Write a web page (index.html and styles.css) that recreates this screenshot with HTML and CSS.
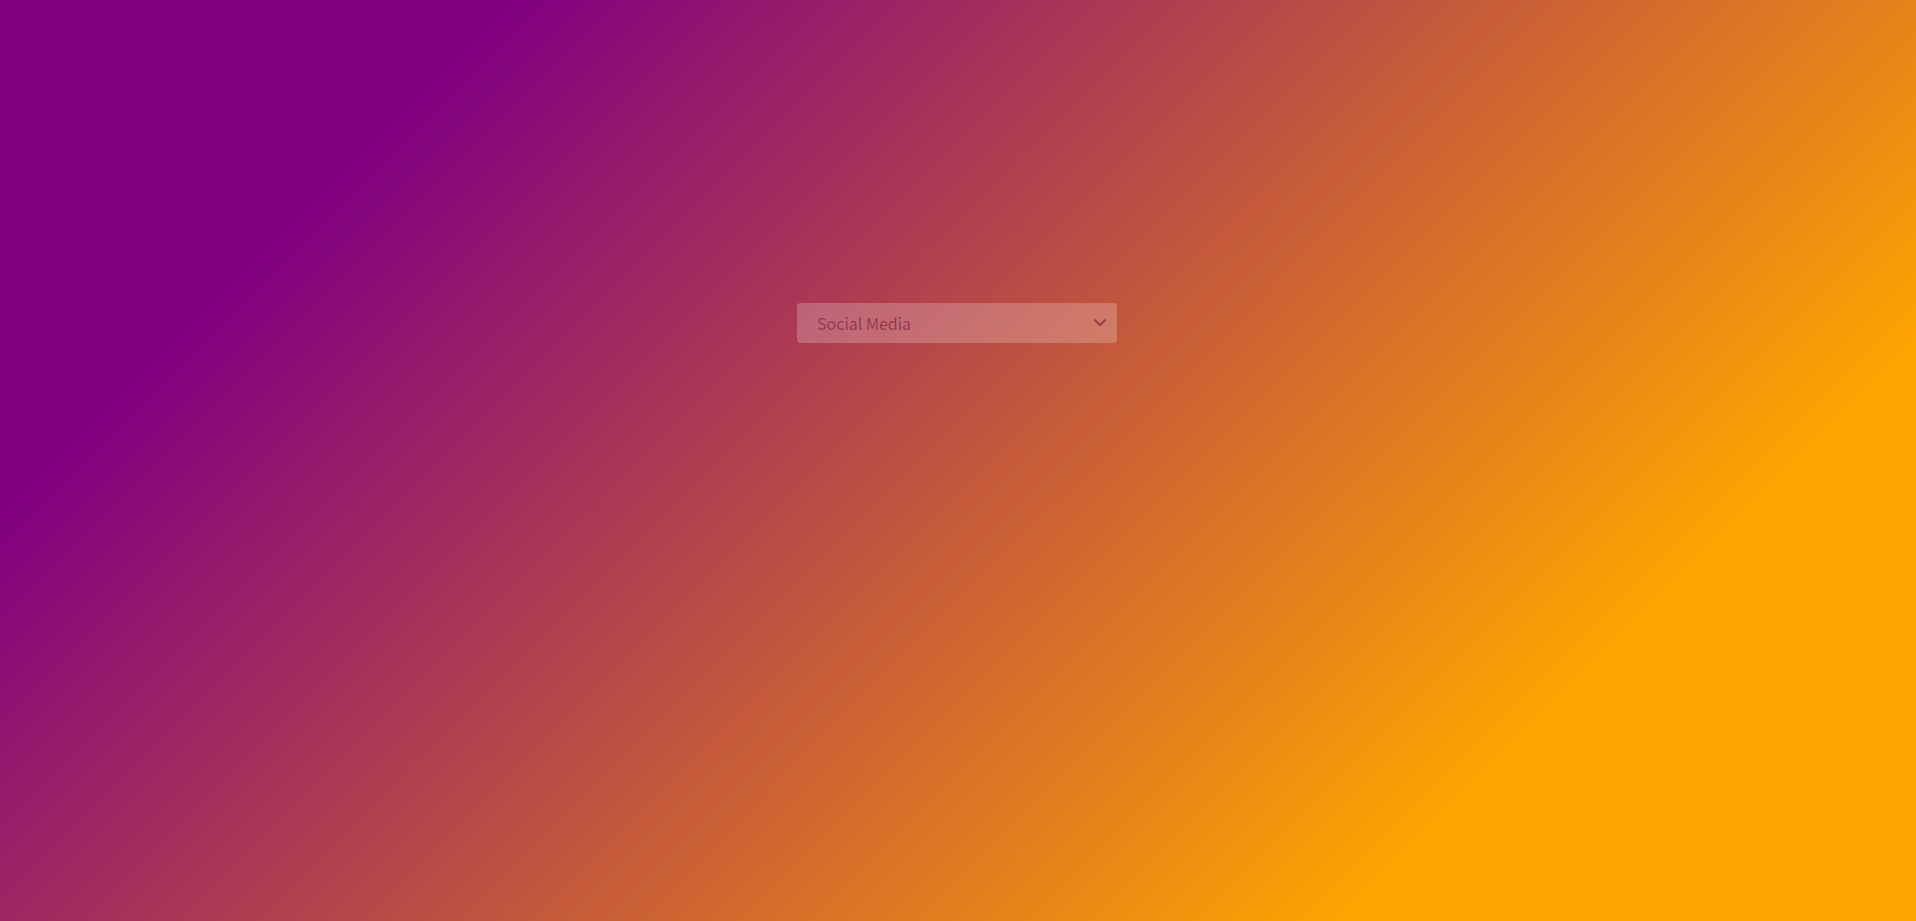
FILE: index.html
```html
<!DOCTYPE html>
<html lang="en">
<head>
<meta charset="utf-8">
<title>Social Media</title>
<link rel="stylesheet" href="styles.css">
</head>
<body>
<main class="page">
  <div class="select">
    <span class="select-label">Social Media</span>
    <svg class="chevron" width="12" height="8" viewBox="0 0 12 8" aria-hidden="true">
      <path d="M1 1.2 L6 6.2 L11 1.2" fill="none" stroke="currentColor" stroke-width="1.9" stroke-linecap="round" stroke-linejoin="round"/>
    </svg>
  </div>
</main>
</body>
</html>
```

FILE: styles.css
```css
html, body {
  margin: 0;
  padding: 0;
  height: 100%;
}

body {
  font-family: "Noto Sans CJK KR", "Noto Sans", sans-serif;
  background: linear-gradient(135deg, #800080 18%, #ffa500 80%);
  background-attachment: fixed;
  min-height: 100vh;
}

.page {
  display: flex;
  justify-content: center;
  padding-top: 303px;
}

.select {
  box-sizing: border-box;
  width: 320px;
  height: 40px;
  margin-right: 2px;
  display: flex;
  align-items: center;
  justify-content: space-between;
  padding: 0 11px 0 20px;
  border-radius: 4px;
  background: rgba(255, 255, 255, 0.22);
  color: rgba(105, 15, 50, 0.55);
}

.select-label {
  font-size: 16px;
  line-height: 1;
}

.chevron {
  display: block;
  color: rgba(105, 15, 50, 0.6);
}
```
